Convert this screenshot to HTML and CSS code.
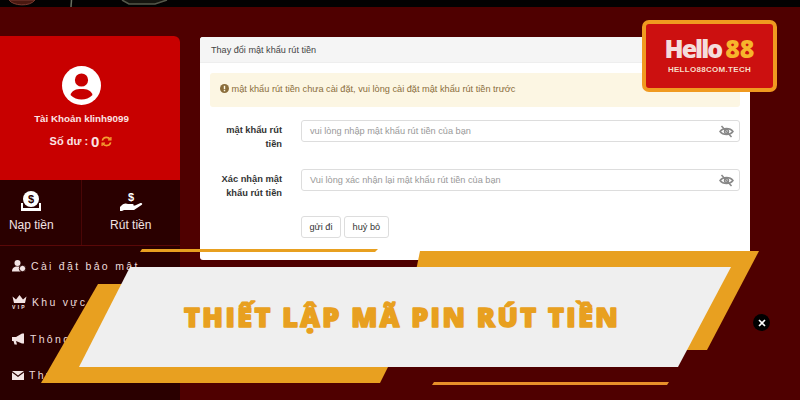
FILE: index.html
```html
<!DOCTYPE html>
<html lang="en">
<head>
    <meta charset="UTF-8">
    <meta name="viewport" content="width=device-width, initial-scale=1.0">
    <title>Thiết lập mã PIN rút tiền</title>
    <link rel="stylesheet" href="styles.css">
</head>
<body>
    <div class="topBar">
        <svg class="topArt" width="800" height="7" viewBox="0 0 800 7">
            <path d="M9 0 C13 6 30 7 35 0Z" fill="#4a1810" stroke="#7a3a30" stroke-width="1"/>
            <path d="M71.500 0 L71 7" stroke="#6a7060" stroke-width="1.500"/>
            <path d="M122 0 L129 4 H155 L167 0" fill="#15150f" stroke="#55584a" stroke-width="1.500"/>
        </svg>
    </div>
    <div class="page">
        <aside class="sidebar">
            <div class="profileCard">
                <svg class="avatar" width="39" height="39" viewBox="0 0 39 39">
                    <circle cx="19.500" cy="19.500" r="19.500" fill="#fff"/>
                    <circle cx="19.500" cy="14" r="6.600" fill="#c80000"/>
                    <path d="M8.500 29 C10 24 14 23 19.500 23 C25 23 29 24 30.500 29 C27.500 32 23.500 33.500 19.500 33.500 C15.500 33.500 11.500 32 8.500 29Z" fill="#c80000"/>
                </svg>
                <div class="accountName">Tài Khoản klinh9099</div>
                <div class="balance">
                    Số dư : <span class="balanceValue">0</span>
                    <svg class="refresh" width="11" height="11" viewBox="0 0 12 12" fill="none" stroke="#f5a030" stroke-width="1.700">
                        <path d="M1.500 5 C2 2.500 4 1.500 6 1.500 C8 1.500 9.300 2.500 10 3.500"/>
                        <path d="M10.500 7 C10 9.500 8 10.500 6 10.500 C4 10.500 2.700 9.500 2 8.500"/>
                        <path d="M10.800 1 V4.200 H7.600" stroke-width="1.400"/>
                        <path d="M1.200 11 V7.800 H4.400" stroke-width="1.400"/>
                    </svg>
                </div>
            </div>
            <div class="cashRow">
                <a class="cashButton">
                    <svg width="22" height="20" viewBox="0 0 22 20">
                        <circle cx="11" cy="8" r="8" fill="#fff"/>
                        <text class="dollarGlyph" x="11" y="12" text-anchor="middle" fill="#2a0000">$</text>
                        <path d="M1 12 H3 V17 H19 V12 H21 V20 H1Z" fill="#fff"/>
                    </svg>
                    <span>Nạp tiền</span>
                </a>
                <a class="cashButton">
                    <svg width="24" height="20" viewBox="0 0 24 20">
                        <text class="dollarGlyph" x="12" y="10" text-anchor="middle" fill="#fff">$</text>
                        <path d="M1 16 C4 12 7 12 9 13 H13.500 C15 13 15 15 13.500 15 H10 L16 14.500 L21.500 12 C23 11.500 24 13 22.500 14 L15 19 H5 L3 20 H1Z" fill="#fff"/>
                    </svg>
                    <span>Rút tiền</span>
                </a>
            </div>
            <ul class="menu">
                <li class="menuItem">
                    <svg width="14" height="12" viewBox="0 0 14 12" fill="#f3e4e4">
                        <circle cx="5.500" cy="3" r="3"/>
                        <path d="M0 11.500 C0 8 2 6.500 5.500 6.500 C7 6.500 8 6.800 8.500 7.300 V11.500Z"/>
                        <circle cx="10.500" cy="8.500" r="3.200" stroke="#2a0000" stroke-width="1"/>
                    </svg>
                    <span>Cài đặt bảo mật</span>
                </li>
                <li class="menuItem">
                    <svg width="15" height="15" viewBox="0 0 15 15" fill="#f3e4e4">
                        <path d="M0.500 1.500 L4 4.500 L7.500 0 L11 4.500 L14.500 1.500 L13 8 H2Z"/>
                        <text class="vipGlyph" x="7.500" y="14" text-anchor="middle">VIP</text>
                    </svg>
                    <span>Khu vực VIP</span>
                </li>
                <li class="menuItem">
                    <svg width="13" height="12" viewBox="0 0 13 12" fill="#f3e4e4">
                        <path d="M0 4 H4 L10 0.500 H12 V10.500 H10 L4 8 L5 11.500 H2.500 L1.500 8 H0Z"/>
                    </svg>
                    <span>Thông báo</span>
                </li>
                <li class="menuItem">
                    <svg width="12" height="9" viewBox="0 0 12 9" fill="#f3e4e4">
                        <path d="M0 0 H12 L6 4.500Z"/>
                        <path d="M0 1.500 L6 6 L12 1.500 V9 H0Z"/>
                    </svg>
                    <span>Thư của tôi</span>
                </li>
            </ul>
        </aside>
        <main class="content">
            <section class="panel">
                <div class="panelHeading">Thay đổi mật khẩu rút tiền</div>
                <div class="panelBody">
                    <div class="notice">
                        <svg width="9" height="9" viewBox="0 0 10 10">
                            <circle cx="5" cy="5" r="5" fill="#8a6d3b"/>
                            <rect x="4.200" y="2" width="1.600" height="3.800" fill="#fcf8e3"/>
                            <rect x="4.200" y="6.600" width="1.600" height="1.500" fill="#fcf8e3"/>
                        </svg>
                        mật khẩu rút tiền chưa cài đặt, vui lòng cài đặt mật khẩu rút tiền trước
                    </div>
                    <div class="formRow">
                        <label class="formLabel">mật khẩu rút tiền</label>
                        <div class="inputBox">
                            <span>vui lòng nhập mật khẩu rút tiền của bạn</span>
                            <svg class="eye" width="15" height="13" viewBox="0 0 15 13" fill="none" stroke="#888" stroke-width="1.500">
                                <path d="M1 6.500 C4 2.500 11 2.500 14 6.500 C11 10.500 4 10.500 1 6.500Z"/>
                                <circle cx="7.500" cy="6.500" r="2"/>
                                <path d="M2.500 1 L12.500 12"/>
                            </svg>
                        </div>
                    </div>
                    <div class="formRow">
                        <label class="formLabel">Xác nhận mật khẩu rút tiền</label>
                        <div class="inputBox">
                            <span>Vui lòng xác nhận lại mật khẩu rút tiền của bạn</span>
                            <svg class="eye" width="15" height="13" viewBox="0 0 15 13" fill="none" stroke="#888" stroke-width="1.500">
                                <path d="M1 6.500 C4 2.500 11 2.500 14 6.500 C11 10.500 4 10.500 1 6.500Z"/>
                                <circle cx="7.500" cy="6.500" r="2"/>
                                <path d="M2.500 1 L12.500 12"/>
                            </svg>
                        </div>
                    </div>
                    <div class="formActions">
                        <button class="formButton">gửi đi</button>
                        <button class="formButton">huỷ bỏ</button>
                    </div>
                </div>
            </section>
        </main>
    </div>

    <div class="logo">
        <div class="logoMark"><span class="logoHello">Hello</span><span class="logoNum">88</span></div>
        <div class="logoSite">HELLO88COM.TECH</div>
    </div>

    <div class="banner">
        <svg class="bannerShapes" width="800" height="400" viewBox="0 0 800 400">
            <polygon points="142,249 378,249 375,252 140,252" fill="#e8a020"/>
            <polygon points="420,251 759,251 707,350 400,350" fill="#e8a020"/>
            <polygon points="98,284 400,284 388,367 380,383 41,383" fill="#e8a020"/>
            <polygon points="130,267 731,267 678,367 79,367" fill="#efefef"/>
            <polygon points="434,382 669,382 667,385 432,385" fill="#e8902a"/>
            <text class="bannerTitle" x="184" y="326.500">THIẾT LẬP MÃ PIN RÚT TIỀN</text>
        </svg>
    </div>

    <div class="closeBtn">
        <svg width="8" height="8" viewBox="0 0 8 8" stroke="#fff" stroke-width="1.600">
            <path d="M1 1 L7 7 M7 1 L1 7"/>
        </svg>
    </div>
</body>
</html>
```

FILE: styles.css
```css
* {
    box-sizing: border-box;
}
html, body {
    margin: 0;
    padding: 0;
    height: 100%;
    overflow: hidden;
}
body {
    font-family: "Liberation Sans", Arial, sans-serif;
    background-color: #4f0000;
    position: relative;
}
.topBar {
    height: 7px;
    background-color: #030202;
    overflow: hidden;
}
.topArt {
    display: block;
}
.page {
    display: flex;
    height: 393px;
    padding-top: 29px;
}

/* left column, runs off the left edge of the window */
.sidebar {
    width: 198px;
    margin-left: -18px;
    flex-shrink: 0;
    display: flex;
    flex-direction: column;
    background-color: #2a0000;
    border-top-right-radius: 6px;
}
.profileCard {
    height: 144px;
    background-color: #c80000;
    border-top-right-radius: 6px;
    display: flex;
    flex-direction: column;
    align-items: center;
    padding-top: 30px;
    color: #fbe4e4;
}
.avatar {
    display: block;
}
.accountName {
    font-size: 9.800px;
    font-weight: bold;
    margin-top: 8px;
    margin-left: 1px;
}
.balance {
    display: flex;
    align-items: center;
    gap: 2px;
    font-size: 11px;
    font-weight: bold;
    margin-top: 9px;
    height: 16px;
}
.balanceValue {
    font-size: 15px;
    margin-left: 1px;
}
.cashRow {
    display: flex;
    height: 66px;
    border-bottom: 1px solid #5a0808;
}
.cashButton {
    flex: 1;
    display: flex;
    flex-direction: column;
    align-items: center;
    gap: 7px;
    padding-top: 11px;
    color: #f3e4e4;
    font-size: 12px;
}
.cashButton + .cashButton {
    border-left: 1px solid #4a0606;
}
.dollarGlyph {
    font-size: 11px;
    font-weight: bold;
    font-family: "Liberation Sans", Arial, sans-serif;
}
.vipGlyph {
    font-size: 5px;
    font-weight: bold;
    font-family: "Liberation Sans", Arial, sans-serif;
}
.menu {
    list-style: none;
    margin: 0;
    padding: 12px 0 0 30px;
    display: flex;
    flex-direction: column;
    gap: 21.500px;
}
.menuItem {
    display: flex;
    align-items: center;
    gap: 5px;
    height: 15px;
    color: #ecdcdc;
    font-size: 10.500px;
    letter-spacing: 2.300px;
    white-space: nowrap;
}

/* form panel */
.content {
    flex: 1;
    padding: 1px 50px 0 20px;
}
.panel {
    height: 223px;
    background-color: #fff;
    border-radius: 3px;
    color: #333;
    overflow: hidden;
}
.panelHeading {
    height: 26px;
    line-height: 26px;
    padding-left: 11px;
    font-size: 9.100px;
    color: #444;
    background-color: #f5f5f5;
    border-bottom: 1px solid #eee;
}
.panelBody {
    padding: 10px 10px 0 10px;
}
.notice {
    height: 34px;
    line-height: 33px;
    padding-left: 10px;
    font-size: 9.200px;
    color: #8a6d3b;
    background-color: #fcf6e3;
    border-radius: 3px;
}
.notice svg {
    vertical-align: -1px;
}
.formRow {
    display: flex;
    margin-top: 13px;
    height: 36px;
}
.formLabel {
    width: 91px;
    flex-shrink: 0;
    padding: 4px 19px 0 8px;
    font-size: 9.300px;
    font-weight: bold;
    line-height: 13.500px;
    text-align: right;
}
.inputBox {
    flex: 1;
    height: 22px;
    display: flex;
    justify-content: space-between;
    align-items: center;
    padding: 0 5px 0 8px;
    font-size: 9.200px;
    color: #999;
    border: 1px solid #ddd;
    border-radius: 3px;
}
.formActions {
    display: flex;
    gap: 3px;
    margin-top: 11px;
    padding-left: 91px;
}
.formButton {
    height: 22px;
    padding: 0 7.500px;
    font-family: inherit;
    font-size: 9.200px;
    color: #333;
    background-color: #fff;
    border: 1px solid #ddd;
    border-radius: 3px;
}

/* overlays */
.logo {
    position: absolute;
    left: 642px;
    top: 20px;
    width: 135px;
    height: 72px;
    background-color: #cc1010;
    border: 4px solid #f09a20;
    border-radius: 7px;
    text-align: center;
}
.logoMark {
    margin-top: 9px;
    font-family: "Open Sans", sans-serif;
    font-size: 25px;
    font-weight: 800;
    line-height: 31px;
}
.logoHello {
    color: #f4dcdc;
    letter-spacing: -2px;
}
.logoNum {
    color: #f7b52c;
    margin-left: 4px;
}
.logoSite {
    font-size: 8px;
    font-weight: bold;
    line-height: 10px;
    letter-spacing: 0.300px;
    color: #f6dcc8;
    margin-top: 1px;
}
.banner {
    position: absolute;
    left: 0;
    top: 0;
    width: 800px;
    height: 400px;
}
.bannerShapes {
    display: block;
}
.bannerTitle {
    font-family: "Open Sans", sans-serif;
    font-size: 27px;
    font-weight: 800;
    letter-spacing: 2.400px;
    fill: #e8a020;
    stroke: #e8a020;
    stroke-width: 1.600px;
    stroke-linejoin: round;
}
.closeBtn {
    position: absolute;
    left: 753px;
    top: 314px;
    width: 17px;
    height: 17px;
    background-color: #000;
    border-radius: 50%;
    display: flex;
    align-items: center;
    justify-content: center;
}
```
